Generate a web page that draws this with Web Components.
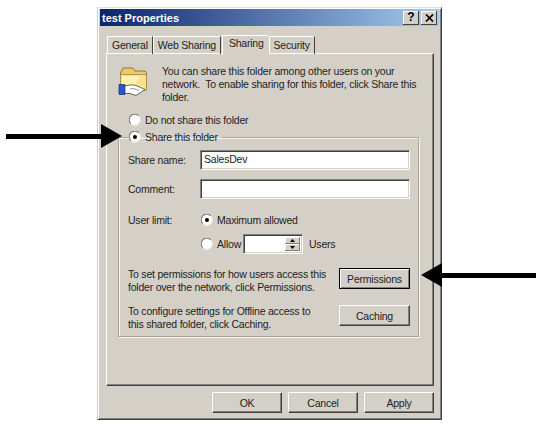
<!DOCTYPE html>
<html>
<head>
<meta charset="utf-8">
<title>test Properties</title>
<style>
    html, body { margin: 0; background: #fff; }
    body { width: 537px; height: 424px; overflow: hidden; position: relative; font: 10.5px "Liberation Sans", Arial, sans-serif; letter-spacing: -0.22px; color: #222; }
    .intro { display: flex; gap: 13px; height: 44px; align-items: flex-start; }
    .intro p { margin: -2px 0 0; line-height: 13px; white-space: nowrap; }
    .radios { display: flex; margin-left: 11px; }
    .field { display: grid; grid-template-columns: 72px 210px; align-items: center; height: 20px; }
    .field + .field { margin-top: 9px; }
    .limit { display: grid; grid-template-columns: 73px 1fr; height: 20px; margin-top: 11px; align-items: center; }
    .allow { display: flex; align-items: center; gap: 2px; height: 20px; margin: 4px 0 0 73px; }
    .allow span { margin-left: 4px; }
    .note { display: flex; justify-content: space-between; width: 282px; }
    .note p { margin: 0; line-height: 13px; white-space: nowrap; }
    .note.first { margin-top: 14px; }
    .note.second { margin-top: 11px; }
</style>
</head>
<body>
<win-dialog heading="test Properties">
    <win-tab slot="tabs">General</win-tab>
    <win-tab slot="tabs">Web Sharing</win-tab>
    <win-tab slot="tabs" active>Sharing</win-tab>
    <win-tab slot="tabs">Security</win-tab>

    <div class="intro">
        <share-icon></share-icon>
        <p>You can share this folder among other users on your<br>network.&nbsp; To enable sharing for this folder, click Share this<br>folder.</p>
    </div>
    <div class="radios">
        <win-radio>Do not share this folder</win-radio>
    </div>
    <group-box>
        <win-radio slot="legend" checked>Share this folder</win-radio>
        <div class="field"><span>Share name:</span><win-input value="SalesDev"></win-input></div>
        <div class="field"><span>Comment:</span><win-input></win-input></div>
        <div class="limit"><span>User limit:</span><win-radio checked>Maximum allowed</win-radio></div>
        <div class="allow"><win-radio>Allow</win-radio><win-spinner></win-spinner><span>Users</span></div>
        <div class="note first">
            <p>To set permissions for how users access this<br>folder over the network, click Permissions.</p>
            <win-button default wide>Permissions</win-button>
        </div>
        <div class="note second">
            <p>To configure settings for Offline access to<br>this shared folder, click Caching.</p>
            <win-button wide>Caching</win-button>
        </div>
    </group-box>

    <win-button slot="actions">OK</win-button>
    <win-button slot="actions">Cancel</win-button>
    <win-button slot="actions">Apply</win-button>
</win-dialog>
<arrow-mark dir="right" style="left:6px;top:124px;width:116px"></arrow-mark>
<arrow-mark dir="left" style="left:421px;top:263px;width:115px"></arrow-mark>

<script>
class WinDialog extends HTMLElement {
    constructor() {
        super();
        this.attachShadow({mode: 'open'});
    }
    connectedCallback() {
        this.shadowRoot.innerHTML = `
            <style>
                :host {
                    display: block;
                    box-sizing: border-box;
                    width: 345px;
                    height: 413px;
                    margin: 7px 0 0 97px;
                    background: #d4d0c8;
                    border: 1px solid;
                    border-color: #e4e2dc #404040 #404040 #d4d0c8;
                    box-shadow: inset 1px 1px 0 #fff, inset -1px -1px 0 #808080;
                }
                .title {
                    display: flex;
                    align-items: center;
                    justify-content: space-between;
                    height: 17px;
                    margin: 1px 2px 0;
                    padding: 0 2px 0 2px;
                    background: linear-gradient(90deg, #0a246a, #a6caf0);
                    color: #fff;
                    font-weight: bold;
                    font-size: 11px;
                    letter-spacing: 0;
                }
                .ctrls { display: flex; }
                .ctrls b {
                    display: flex;
                    align-items: center;
                    justify-content: center;
                    box-sizing: border-box;
                    width: 16px;
                    height: 14px;
                    background: #d4d0c8;
                    color: #000;
                    font: bold 12px/13px "Liberation Sans", sans-serif;
                    box-shadow: inset -1px -1px 0 #404040, inset 1px 1px 0 #fff;
                }
                .tabs { display: flex; align-items: flex-end; height: 22px; margin: 6px 0 0 9px; position: relative; z-index: 1; }
                .panel {
                    box-sizing: border-box;
                    width: 328px;
                    height: 333px;
                    margin: -1px 0 0 8px;
                    padding: 13px 10px 0 11px;
                    border: 1px solid;
                    border-color: #fff #404040 #404040 #fff;
                    box-shadow: inset -1px -1px 0 #808080;
                }
                .actions { display: flex; justify-content: flex-end; gap: 6px; margin: 6px 7px 0 0; }
            </style>
            <div class="title">
                <span>${this.getAttribute('heading')}</span>
                <span class="ctrls"><b>?</b><b style="margin-left:2px"><svg width="9" height="8" viewBox="0 0 9 8"><path d="M1 .5L8 7.5M8 .5L1 7.5" stroke="#000" stroke-width="1.7"/></svg></b></span>
            </div>
            <div class="tabs"><slot name="tabs"></slot></div>
            <div class="panel"><slot></slot></div>
            <div class="actions"><slot name="actions"></slot></div>
        `;
    }
}

class WinTab extends HTMLElement {
    constructor() {
        super();
        this.attachShadow({mode: 'open'});
        this.shadowRoot.innerHTML = `
            <style>
                :host {
                    display: block;
                    box-sizing: border-box;
                    height: 18px;
                    padding: 2px 4px 0;
                    border: 1px solid #fff;
                    border-bottom: 0;
                    border-right: 1px solid #404040;
                }
                :host([active]) {
                    height: 20px;
                    padding: 1px 4px 0 6px;
                    margin: 0 0 -1px 1px;
                    background: #d4d0c8;
                    border-right-color: #d4d0c8;
                }
            </style>
            <slot></slot>
        `;
    }
}

class WinRadio extends HTMLElement {
    constructor() {
        super();
        this.attachShadow({mode: 'open'});
        this.shadowRoot.innerHTML = `
            <style>
                :host { display: inline-flex; align-items: center; gap: 4px; height: 18px; white-space: nowrap; }
                svg { display: block; }
            </style>
            <svg width="12" height="12" viewBox="0 0 12 12">
                <circle cx="6" cy="6" r="5.5" fill="#fff"/>
                <path d="M1.8 9.6A5.5 5.5 0 0 1 9.6 1.8" fill="none" stroke="#808080" stroke-width="1.2"/>
                <path d="M10.2 2.6A5.5 5.5 0 0 1 2.6 10.2" fill="none" stroke="#eeece6" stroke-width="1.2"/>
                ${this.hasAttribute('checked') ? '<circle cx="6" cy="6" r="2" fill="#000"/>' : ''}
            </svg>
            <slot></slot>
        `;
    }
}

class GroupBox extends HTMLElement {
    constructor() {
        super();
        this.attachShadow({mode: 'open'});
        this.shadowRoot.innerHTML = `
            <style>
                :host { display: block; margin-top: -1px; }
                fieldset {
                    box-sizing: border-box;
                    width: 301px;
                    height: 209px;
                    margin: 0;
                    padding: 4px 7px 0 9px;
                    border: 1px solid #a8a59e;
                    box-shadow: 1px 1px 0 #f4f3ef, inset 1px 1px 0 #f4f3ef;
                }
                legend { padding: 0 4px 0 0; margin-left: 1px; line-height: 18px; height: 18px; }
            </style>
            <fieldset>
                <legend><slot name="legend"></slot></legend>
                <slot></slot>
            </fieldset>
        `;
    }
}

class WinInput extends HTMLElement {
    constructor() {
        super();
        this.attachShadow({mode: 'open'});
        this.shadowRoot.innerHTML = `
            <style>
                :host {
                    display: block;
                    box-sizing: border-box;
                    height: 20px;
                    padding: 0 3px;
                    line-height: 17px;
                    background: #fff;
                    border: 1px solid;
                    border-color: #808080 #fff #fff #808080;
                    box-shadow: inset 1px 1px 0 #404040, inset -1px -1px 0 #d4d0c8;
                }
            </style>
            ${this.getAttribute('value') || ''}
        `;
    }
}

class WinSpinner extends HTMLElement {
    constructor() {
        super();
        this.attachShadow({mode: 'open'});
        this.shadowRoot.innerHTML = `
            <style>
                :host {
                    display: flex;
                    justify-content: flex-end;
                    box-sizing: border-box;
                    width: 60px;
                    height: 20px;
                    padding: 2px;
                    background: #fff;
                    border: 1px solid;
                    border-color: #808080 #fff #fff #808080;
                    box-shadow: inset 1px 1px 0 #404040, inset -1px -1px 0 #d4d0c8;
                }
                .btns { display: flex; flex-direction: column; width: 15px; }
                i {
                    flex: 1;
                    display: flex;
                    align-items: center;
                    justify-content: center;
                    background: #d4d0c8;
                    box-shadow: inset -1px -1px 0 #808080, inset 1px 1px 0 #fff;
                }
                svg { display: block; }
            </style>
            <div class="btns">
                <i><svg width="5" height="3"><path d="M2.5 0L5 3H0z" fill="#000"/></svg></i>
                <i><svg width="5" height="3"><path d="M0 0H5L2.5 3z" fill="#000"/></svg></i>
            </div>
        `;
    }
}

class WinButton extends HTMLElement {
    constructor() {
        super();
        this.attachShadow({mode: 'open'});
        this.shadowRoot.innerHTML = `
            <style>
                :host {
                    display: flex;
                    align-items: center;
                    justify-content: center;
                    box-sizing: border-box;
                    flex: none;
                    width: 70px;
                    height: 21px;
                    background: #d4d0c8;
                    border: 1px solid;
                    border-color: #fff #404040 #404040 #fff;
                    box-shadow: inset -1px -1px 0 #808080;
                }
                :host([wide]) { width: 71px; }
                :host([default]) {
                    border-color: #000;
                    box-shadow: inset 1px 1px 0 #fff, inset -1px -1px 0 #808080;
                }
            </style>
            <slot></slot>
        `;
    }
}

class ShareIcon extends HTMLElement {
    constructor() {
        super();
        this.attachShadow({mode: 'open'});
        this.shadowRoot.innerHTML = `
            <style>
                :host { display: block; flex: none; width: 31px; height: 31px; }
                svg { display: block; }
            </style>
            <svg width="31" height="31" viewBox="0 0 31 31">
                <path d="M2.5 6L5 1H15L17 4H27L28.5 6V23H2.5z" fill="#eccb62" stroke="#8a7a3a" stroke-linejoin="round"/>
                <path d="M2.5 7.5H28.5V23H2.5z" fill="#f7e488" stroke="#9a8a48" stroke-width=".8"/>
                <path d="M4 9H22L15 21H4z" fill="#fff2ac"/>
                <path d="M6 19L12 18C17 17 23 21 27 22.5L18 28.5L12 26.5H6z" fill="#fff" stroke="#555" stroke-width=".9"/>
                <path d="M1 17.5H7V27.5H1z" fill="#2f54c0" stroke="#1a2c78" stroke-width=".7"/>
                <path d="M12 22C15 21 18 22 21 23.5" fill="none" stroke="#777" stroke-width=".8"/>
            </svg>
        `;
    }
}

class ArrowMark extends HTMLElement {
    constructor() {
        super();
        this.attachShadow({mode: 'open'});
        this.shadowRoot.innerHTML = `
            <style>
                :host { display: flex; align-items: center; position: absolute; height: 24px; }
                :host([dir="left"]) { flex-direction: row-reverse; }
                .shaft { flex: 1; height: 5px; background: #000; }
                .head { flex: none; width: 0; height: 0; border: 12px solid transparent; border-right-width: 0; border-left: 21px solid #000; }
                :host([dir="left"]) .head { border-left-width: 0; border-left-color: transparent; border-right: 21px solid #000; }
            </style>
            <div class="shaft"></div>
            <div class="head"></div>
        `;
    }
}

customElements.define('win-dialog', WinDialog);
customElements.define('win-tab', WinTab);
customElements.define('win-radio', WinRadio);
customElements.define('group-box', GroupBox);
customElements.define('win-input', WinInput);
customElements.define('win-spinner', WinSpinner);
customElements.define('win-button', WinButton);
customElements.define('share-icon', ShareIcon);
customElements.define('arrow-mark', ArrowMark);
</script>
</body>
</html>
